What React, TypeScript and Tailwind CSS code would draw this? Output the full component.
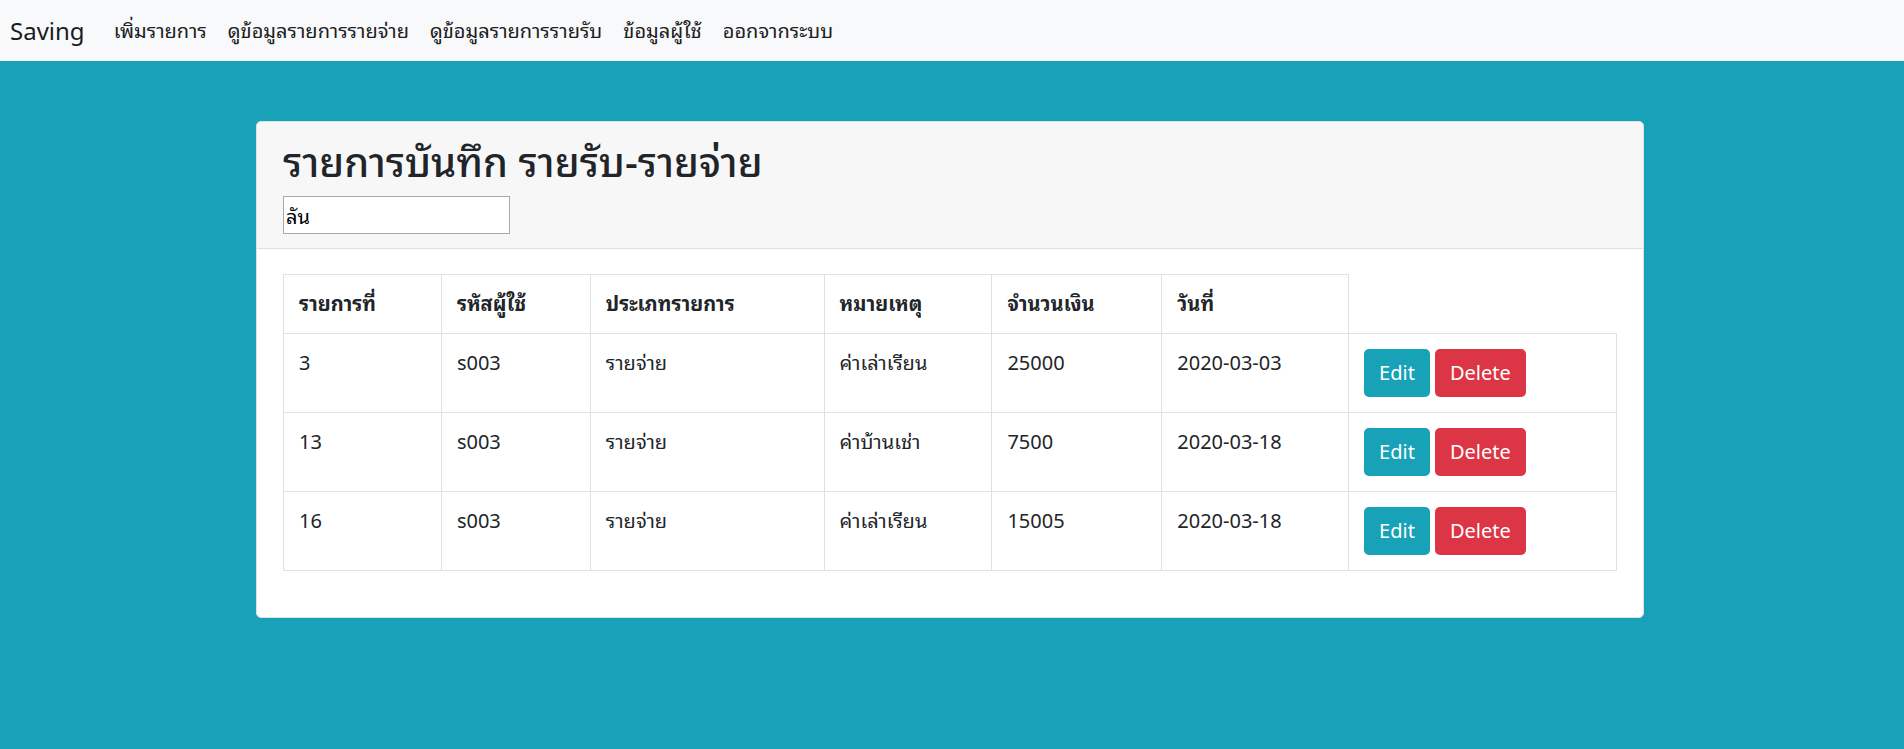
import React from "react";

const rows = [
  { id: "3", user: "s003", type: "รายจ่าย", note: "ค่าเล่าเรียน", amount: "25000", date: "2020-03-03" },
  { id: "13", user: "s003", type: "รายจ่าย", note: "ค่าบ้านเช่า", amount: "7500", date: "2020-03-18" },
  { id: "16", user: "s003", type: "รายจ่าย", note: "ค่าเล่าเรียน", amount: "15005", date: "2020-03-18" },
];

const heads = ["รายการที่", "รหัสผู้ใช้", "ประเภทรายการ", "หมายเหตุ", "จำนวนเงิน", "วันที่"];

const App = () => {
  return (
    <div className="min-h-[749px] bg-[#17a2b8] font-['Noto_Sans','Open_Sans','Noto_Sans_Thai_Looped','Loma','Garuda','Tlwg_Typo','Noto_Sans_Thai',sans-serif] text-[#212529]">
      <nav className="h-[61px] bg-[#f8f9fa] flex flex-row items-center pl-[10px]">
        <span className="text-[24px] leading-[30px] text-[#1c1c1c] mr-[29px]">Saving</span>
        <ul className="flex flex-row items-center gap-[21px] text-[20px] leading-[30px] text-[#202020]">
          <li className="cursor-pointer">เพิ่มรายการ</li>
          <li className="cursor-pointer">ดูข้อมูลรายการรายจ่าย</li>
          <li className="cursor-pointer">ดูข้อมูลรายการรายรับ</li>
          <li className="cursor-pointer">ข้อมูลผู้ใช้</li>
          <li className="cursor-pointer">ออกจากระบบ</li>
        </ul>
      </nav>

      <div className="pt-[60px] flex justify-center">
        <div className="w-[1388px] ml-[-4px] bg-white rounded-[5px] border border-[#dfdfdf] overflow-hidden">
          <div className="bg-[#f7f7f7] border-b border-[#dfdfdf] pt-[16px] pb-[14px] px-[26px]">
            <h2 className="text-[40px] leading-[48px] font-medium mb-[10px]">รายการบันทึก รายรับ-รายจ่าย</h2>
            <input
              defaultValue="ลัน"
              className="block w-[227px] h-[38px] bg-white border border-[#a9a9a9] px-[2px] text-[20px] text-black outline-none"
            />
          </div>
          <div className="px-[26px] pt-[25px] pb-[46px]">
            <table className="border-collapse text-[20px] leading-[30px]">
              <colgroup>
                <col className="w-[158px]" />
                <col className="w-[149px]" />
                <col className="w-[234px]" />
                <col className="w-[168px]" />
                <col className="w-[170px]" />
                <col className="w-[187px]" />
                <col className="w-[268px]" />
              </colgroup>
              <thead>
                <tr>
                  {heads.map((h) => (
                    <th key={h} className="border border-[#dee2e6] text-left font-bold px-[15px] py-[14px] align-middle">
                      {h}
                    </th>
                  ))}
                </tr>
              </thead>
              <tbody>
                {rows.map((r) => (
                  <tr key={r.id} className="h-[79px]">
                    <td className="border border-[#dee2e6] px-[15px] pt-[14px] align-top">{r.id}</td>
                    <td className="border border-[#dee2e6] px-[15px] pt-[14px] align-top">{r.user}</td>
                    <td className="border border-[#dee2e6] px-[15px] pt-[14px] align-top">{r.type}</td>
                    <td className="border border-[#dee2e6] px-[15px] pt-[14px] align-top">{r.note}</td>
                    <td className="border border-[#dee2e6] px-[15px] pt-[14px] align-top">{r.amount}</td>
                    <td className="border border-[#dee2e6] px-[15px] pt-[14px] align-top">{r.date}</td>
                    <td className="border border-[#dee2e6] px-[15px] align-middle">
                      <div className="flex flex-row gap-[5px]">
                        <button className="h-[48px] px-[15px] rounded-[5px] bg-[#17a2b8] text-white text-[20px]">Edit</button>
                        <button className="h-[48px] px-[15px] rounded-[5px] bg-[#dc3545] text-white text-[20px]">Delete</button>
                      </div>
                    </td>
                  </tr>
                ))}
              </tbody>
            </table>
          </div>
        </div>
      </div>
    </div>
  );
};

export default App;
